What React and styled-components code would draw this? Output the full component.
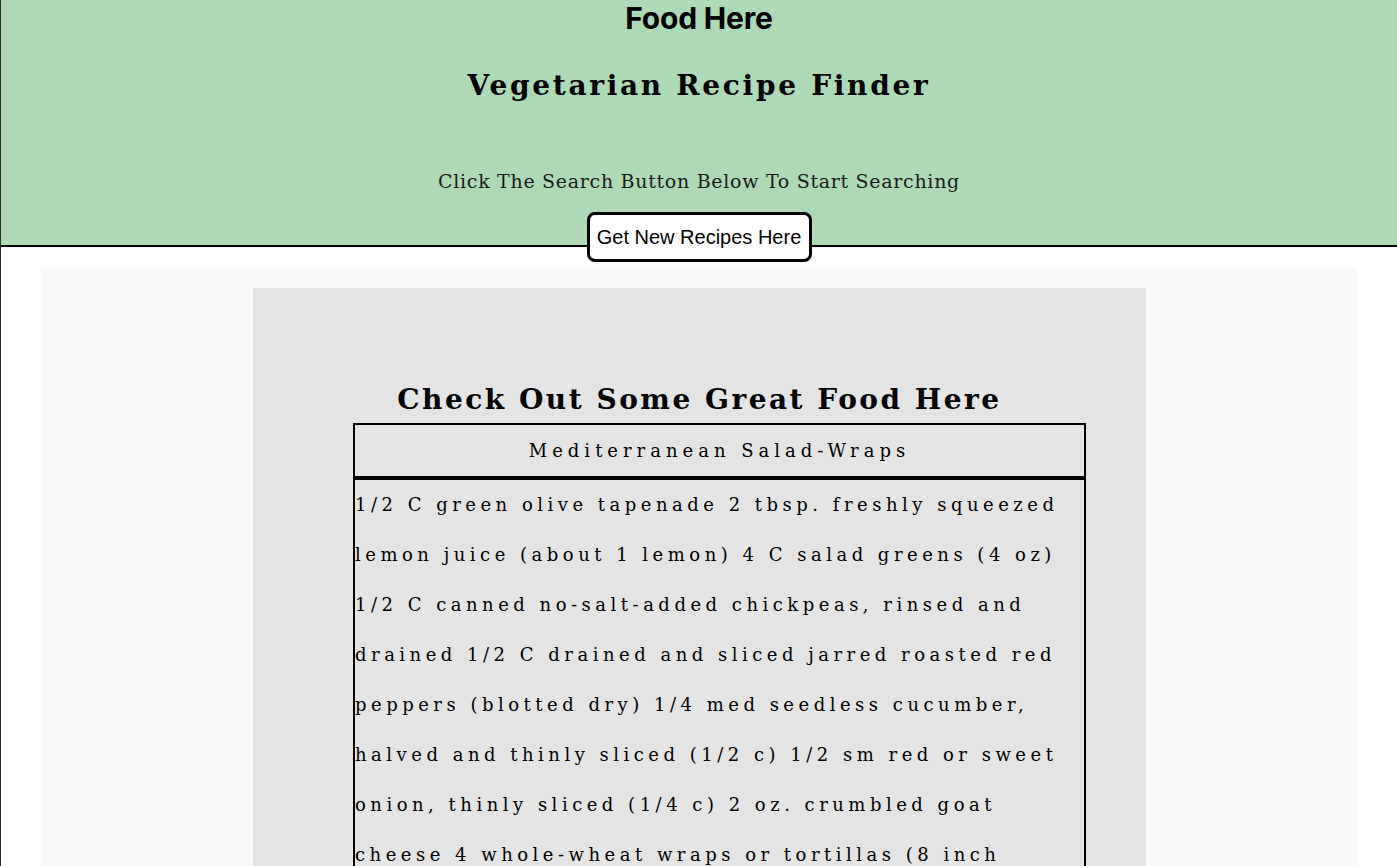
import React from 'react';
import styled, { createGlobalStyle } from 'styled-components';

const GlobalStyle = createGlobalStyle`
  html, body {
    margin: 0;
    padding: 0;
    background: #ffffff;
  }
  body {
    border-left: 1px solid #2e2e2e;
    overflow: hidden;
  }
`;

const Header = styled.header`
  height: 245px;
  background-color: #addab4;
  border-bottom: 2px solid #000;
  display: flex;
  flex-direction: column;
  align-items: center;
  text-align: center;
`;

const Brand = styled.div`
  font-family: Inter, 'Liberation Sans', sans-serif;
  font-weight: 700;
  font-size: 30px;
  letter-spacing: -0.2px;
  line-height: 34px;
  padding-top: 1px;
`;

const Title = styled.h1`
  font-family: 'DejaVu Serif', serif;
  font-weight: 700;
  font-size: 28px;
  letter-spacing: 2.7px;
  margin: 34px 0 0;
  line-height: 34px;
`;

const Subtitle = styled.p`
  font-family: 'DejaVu Serif', serif;
  font-weight: 400;
  font-size: 19px;
  letter-spacing: 0.7px;
  margin: 66px 0 0;
  line-height: 24px;
  color: #1a1a1a;
`;

const SearchButton = styled.button`
  margin-top: 19px;
  width: 225px;
  height: 50px;
  background: #fff;
  border: 3px solid #000;
  border-radius: 8px;
  font-family: 'Liberation Sans', Arial, sans-serif;
  font-size: 20px;
  color: #000;
  cursor: pointer;
  flex-shrink: 0;
`;

const Main = styled.main`
  margin: 21px 39px 0 40px;
  background: #f9f9f9;
  padding: 20px 0 40px;
  display: flex;
  justify-content: center;
`;

const Card = styled.section`
  width: 893px;
  background: #e4e4e4;
  padding: 94px 0 40px;
`;

const CardTitle = styled.h2`
  font-family: 'DejaVu Serif', serif;
  font-weight: 700;
  font-size: 28px;
  letter-spacing: 2.5px;
  text-align: center;
  margin: 0 0 5px;
  line-height: 36px;
`;

const RecipeTable = styled.table`
  margin-left: 100px;
  width: 733px;
  border: 2px solid #000;
  border-collapse: collapse;
  font-family: 'DejaVu Serif', serif;
`;

const HeadCell = styled.th`
  font-weight: 400;
  font-size: 18px;
  letter-spacing: 5px;
  height: 51px;
  border-bottom: 4px solid #000;
  text-align: center;
  padding: 0;
`;

const BodyCell = styled.td`
  font-size: 18px;
  letter-spacing: 4.5px;
  line-height: 50px;
  padding: 0;
  text-align: left;
`;

const ingredients =
  '1/2 C green olive tapenade 2 tbsp. freshly squeezed lemon juice (about 1 lemon) 4 C salad greens (4 oz) 1/2 C canned no-salt-added chickpeas, rinsed and drained 1/2 C drained and sliced jarred roasted red peppers (blotted dry) 1/4 med seedless cucumber, halved and thinly sliced (1/2 c) 1/2 sm red or sweet onion, thinly sliced (1/4 c) 2 oz. crumbled goat cheese 4 whole-wheat wraps or tortillas (8 inch diameter)';

const App = () => {
  return (
    <>
      <GlobalStyle />
      <Header>
        <Brand>Food Here</Brand>
        <Title>Vegetarian Recipe Finder</Title>
        <Subtitle>Click The Search Button Below To Start Searching</Subtitle>
        <SearchButton>Get New Recipes Here</SearchButton>
      </Header>
      <Main>
        <Card>
          <CardTitle>Check Out Some Great Food Here</CardTitle>
          <RecipeTable>
            <thead>
              <tr>
                <HeadCell>Mediterranean Salad-Wraps</HeadCell>
              </tr>
            </thead>
            <tbody>
              <tr>
                <BodyCell>{ingredients}</BodyCell>
              </tr>
            </tbody>
          </RecipeTable>
        </Card>
      </Main>
    </>
  );
};

export default App;
